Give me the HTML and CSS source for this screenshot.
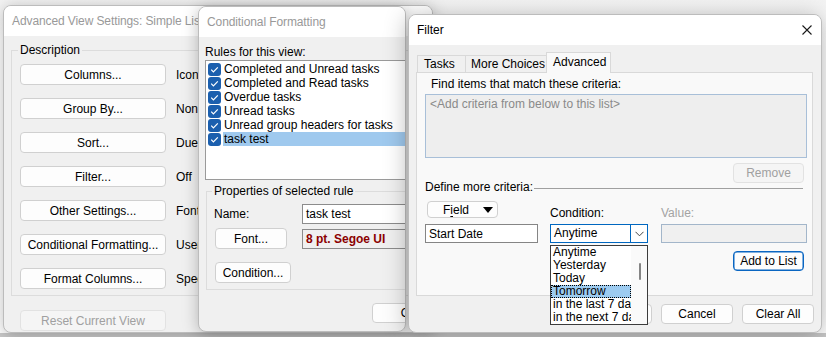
FILE: index.html
```html
<!DOCTYPE html>
<html>
<head>
<meta charset="utf-8">
<title>Filter</title>
<link rel="stylesheet" href="styles.css">
</head>
<body>

<section class="win w1">
  <header class="tb inactive">Advanced View Settings: Simple List</header>
  <div class="b1">
    <fieldset class="grp desc">
      <legend>Description</legend>
      <div class="vrow"><button class="btn wide">Columns...</button><span class="val">Icon, Priority, Attachment, Task Subject</span></div>
      <div class="vrow"><button class="btn wide">Group By...</button><span class="val">None</span></div>
      <div class="vrow"><button class="btn wide">Sort...</button><span class="val">Due Date (descending)</span></div>
      <div class="vrow"><button class="btn wide">Filter...</button><span class="val">Off</span></div>
      <div class="vrow"><button class="btn wide">Other Settings...</button><span class="val">Fonts and other Table View settings</span></div>
      <div class="vrow"><button class="btn wide">Conditional Formatting...</button><span class="val">User defined fonts on each message</span></div>
      <div class="vrow"><button class="btn wide">Format Columns...</button><span class="val">Specify the display formats for each field</span></div>
    </fieldset>
    <button class="btn wide dis reset">Reset Current View</button>
  </div>
</section>

<section class="win w2">
  <header class="tb inactive">Conditional Formatting</header>
  <div class="b2">
    <div class="lbl">Rules for this view:</div>
    <div class="rules">
      <div class="rule"><span class="cb"><svg width="13" height="13" viewBox="0 0 13 13"><path d="M3.2 6.7 5.4 8.9 9.8 4.3" fill="none" stroke="#fff" stroke-width="1.2"/></svg></span><span class="rt">Completed and Unread tasks</span></div>
      <div class="rule"><span class="cb"><svg width="13" height="13" viewBox="0 0 13 13"><path d="M3.2 6.7 5.4 8.9 9.8 4.3" fill="none" stroke="#fff" stroke-width="1.2"/></svg></span><span class="rt">Completed and Read tasks</span></div>
      <div class="rule"><span class="cb"><svg width="13" height="13" viewBox="0 0 13 13"><path d="M3.2 6.7 5.4 8.9 9.8 4.3" fill="none" stroke="#fff" stroke-width="1.2"/></svg></span><span class="rt">Overdue tasks</span></div>
      <div class="rule"><span class="cb"><svg width="13" height="13" viewBox="0 0 13 13"><path d="M3.2 6.7 5.4 8.9 9.8 4.3" fill="none" stroke="#fff" stroke-width="1.2"/></svg></span><span class="rt">Unread tasks</span></div>
      <div class="rule"><span class="cb"><svg width="13" height="13" viewBox="0 0 13 13"><path d="M3.2 6.7 5.4 8.9 9.8 4.3" fill="none" stroke="#fff" stroke-width="1.2"/></svg></span><span class="rt">Unread group headers for tasks</span></div>
      <div class="rule"><span class="cb"><svg width="13" height="13" viewBox="0 0 13 13"><path d="M3.2 6.7 5.4 8.9 9.8 4.3" fill="none" stroke="#fff" stroke-width="1.2"/></svg></span><span class="rt sel">task test</span></div>
    </div>
    <fieldset class="grp props">
      <legend>Properties of selected rule</legend>
      <div class="prow">
        <span class="plbl">Name:</span>
        <span class="tbox">task test</span>
      </div>
      <div class="prow r2">
        <span class="plbl"><button class="btn fontb">Font...</button></span>
        <span class="tbox fontv">8 pt. Segoe UI</span>
      </div>
      <div class="prow r3">
        <button class="btn condb">Condition...</button>
      </div>
    </fieldset>
    <button class="btn okb">OK</button>
  </div>
</section>

<section class="win w3">
  <header class="tb active">
    <span>Filter</span>
    <svg class="close" width="10" height="10" viewBox="0 0 10 10"><path d="M0.5 0.5 9.5 9.5M9.5 0.5 0.5 9.5" stroke="#1a1a1a" stroke-width="1.1"/></svg>
  </header>
  <div class="b3">
    <div class="tabs">
      <span class="tab t1">Tasks</span>
      <span class="tab t2">More Choices</span>
      <span class="tab t3 on">Advanced</span>
    </div>
    <div class="panel">
      <div class="findlbl">Find items that match these criteria:</div>
      <div class="crit">&lt;Add criteria from below to this list&gt;</div>
      <div class="rmrow"><button class="btn dis rm">Remove</button></div>
      <div class="defrow"><span>Define more criteria:</span><span class="rule-line"></span></div>
      <div class="cgrid">
        <button class="btn fieldb"><span>F<span class="u">i</span>eld</span><svg width="10" height="6" viewBox="0 0 10 6"><path d="M0 0h10L5 6z" fill="#000"/></svg></button>
        <span class="clbl">Condition:</span>
        <span class="clbl dim">Value:</span>
        <span class="tbox sd">Start Date</span>
        <span class="combo"><span class="ctext">Anytime</span><span class="cbtn"><svg width="9" height="6" viewBox="0 0 9 6"><path d="M0.5 0.8 4.5 4.8 8.5 0.8" fill="none" stroke="#444" stroke-width="1"/></svg></span></span>
        <span class="tbox vbox"></span>
        <span></span><span></span>
        <button class="btn addb">Add to List</button>
      </div>
    </div>
    <div class="foot">
      <button class="btn fb">OK</button>
      <button class="btn fb">Cancel</button>
      <button class="btn fb">Clear All</button>
    </div>
  </div>
  <div class="drop">
    <div class="dlist">
      <div class="di">Anytime</div>
      <div class="di">Yesterday</div>
      <div class="di">Today</div>
      <div class="di hi">Tomorrow</div>
      <div class="di">in the last 7 days</div>
      <div class="di">in the next 7 days</div>
    </div>
    <div class="sbar"><span class="thumb"></span></div>
  </div>
</section>

</body>
</html>
```

FILE: styles.css
```css
* { box-sizing: border-box; }
html, body { margin: 0; }
body {
  width: 826px;
  height: 337px;
  overflow: hidden;
  position: relative;
  background: linear-gradient(to bottom, #f4f4f4 0, #ffffff 40px, #ffffff 333px, #c9c9c9 333px);
  font: 12px/16px "Liberation Sans", Arial, sans-serif;
  color: #000;
}
button { font: inherit; color: inherit; margin: 0; }

/* windows on the desktop */
.win {
  position: absolute;
  background: #f0f0f0;
  border: 1px solid #bcbcbc;
  border-radius: 8px;
  overflow: hidden;
  box-shadow: 0 2px 16px rgba(0, 0, 0, 0.26);
  display: flex;
  flex-direction: column;
}
.w1 { left: 3px; top: 5px; width: 430px; height: 328px; }
.w2 { left: 198px; top: 6px; width: 208px; height: 326px; }
.w3 { left: 408px; top: 14px; width: 414px; height: 319px; box-shadow: 0 3px 24px rgba(0, 0, 0, 0.3); }

.tb {
  flex: none;
  height: 30px;
  line-height: 30px;
  padding-left: 8px;
  background: #fff;
  white-space: nowrap;
}
.tb.inactive { color: #999; letter-spacing: -0.1px; }
.tb.active { display: flex; justify-content: space-between; align-items: center; padding-right: 9px; }
.close { display: block; }

/* generic controls */
.btn {
  display: flex;
  align-items: center;
  justify-content: center;
  height: 21px;
  padding: 0;
  background: #fdfdfd;
  border: 1px solid #d0d0d0;
  border-radius: 4px;
  white-space: nowrap;
  flex: none;
}
.btn.dis { color: #a0a0a0; background: #f5f5f5; border-color: #e2e2e2; }

.grp { margin: 0; border: 1px solid #dcdcdc; min-width: 0; }
.grp legend { padding: 0 2px; margin-left: -2px; line-height: 16px; }

.tbox {
  display: flex;
  align-items: center;
  height: 20px;
  padding-left: 3px;
  background: #fff;
  border: 1px solid #8c8c8c;
  white-space: nowrap;
  overflow: hidden;
}

/* window 1 */
.b1 { padding: 6px 0 0 7px; }
.desc { width: 420px; padding: 6px 0 6px 8px; }
.vrow { display: flex; align-items: center; gap: 10px; height: 21px; white-space: nowrap; }
.vrow + .vrow { margin-top: 13px; }
.wide { width: 146px; }
.reset { margin: 14px 0 0 9px; }

/* window 2 */
.b2 { padding: 7px 0 0 6px; }
.rules {
  width: 230px;
  height: 120px;
  background: #fff;
  border: 1px solid #9a9a9a;
  padding-top: 1px;
}
.rule { display: flex; align-items: center; height: 14px; white-space: nowrap; }
.cb {
  flex: none;
  width: 13px;
  height: 13px;
  margin-left: 2px;
  border-radius: 3px;
  background: #1b5fae;
}
.cb svg { display: block; }
.rt { margin-left: 2px; padding: 0 1px; line-height: 14px; }
.rt.sel { flex: 1; background: #9fc9ee; }
.props { width: 230px; margin: 3px 0 0 1px; padding: 5px 0 6px 7px; }
.prow { display: grid; grid-template-columns: 88px 1fr; align-items: center; height: 20px; }
.prow.r2 { margin-top: 4px; height: 21px; }
.prow.r3 { margin-top: 13px; height: 21px; display: flex; }
.plbl { white-space: nowrap; }
.fontb { width: 72px; margin-left: 1px; }
.condb { width: 76px; margin-left: 1px; }
.fontv { background: #f0f0f0; color: #8b0000; font-weight: bold; }
.okb { width: 75px; height: 20px; margin: 13px 0 0 167px; }

/* window 3 */
.b3 { padding: 7px 8px 0 7px; }
.tabs {
  position: relative;
  z-index: 1;
  display: flex;
  align-items: flex-end;
  height: 21px;
  margin: 0 0 -1px 1px;
}
.tab {
  height: 18px;
  line-height: 17px;
  border: 1px solid #d9d9d9;
  border-right: none;
  background: #f0f0f0;
  padding-left: 6px;
  white-space: nowrap;
  overflow: hidden;
}
.t1 { width: 48px; }
.t2 { width: 81px; padding-left: 5px; }
.tab.on {
  width: 65px;
  height: 21px;
  line-height: 19px;
  padding-left: 6px;
  background: #f9f9f9;
  border-right: 1px solid #d9d9d9;
  border-bottom: none;
}
.panel {
  height: 224px;
  background: #f9f9f9;
  border: 1px solid #d9d9d9;
  padding: 3px 0 0 8px;
}
.findlbl { margin-left: 6px; }
.crit {
  width: 382px;
  height: 64px;
  margin-top: 2px;
  padding: 1px 0 0 4px;
  background: #eeeeee;
  border: 1px solid #a8bfd8;
  color: #8a8a8a;
}
.rmrow { display: flex; justify-content: flex-end; margin: 5px 8px 0 0; }
.rm { width: 71px; height: 20px; }
.defrow { display: flex; align-items: center; margin: -4px 9px 0 0; height: 16px; white-space: nowrap; }
.rule-line { flex: 1; height: 1px; background: #a0a0a0; margin-left: 1px; margin-top: 2px; }

.cgrid {
  display: grid;
  grid-template-columns: 113px 99px 146px;
  grid-template-rows: 21px 20px 20px;
  column-gap: 12px;
  row-gap: 3px;
  margin-top: 5px;
}
.fieldb {
  width: 71px;
  height: 17px;
  margin: 1px 0 0 2px;
  justify-content: space-between;
  padding: 0 4px 0 15px;
}
.fieldb svg { display: block; margin-top: 1px; }
.u { text-decoration: underline; text-underline-offset: 2px; }
.clbl { align-self: end; line-height: 16px; }
.clbl.dim { color: #a3a3a3; }
.sd { height: 19px; border-color: #858585; }
.combo {
  width: 98px;
  height: 19px;
  display: flex;
  background: #fff;
  border: 1px solid #0067c0;
}
.ctext { flex: 1; padding-left: 3px; line-height: 17px; }
.cbtn {
  width: 17px;
  display: flex;
  align-items: center;
  justify-content: center;
  border-left: 1px solid #0067c0;
}
.cbtn svg { display: block; }
.vbox { height: 19px; background: #f0f0f0; border-color: #a3b6ca; }
.addb {
  justify-self: end;
  width: 71px;
  height: 20px;
  margin: 4px 3px 0 0;
  border: 1px solid #0a66c2;
  box-shadow: inset 0 0 0 0.5px #0a66c2;
}

.foot { display: flex; justify-content: flex-end; gap: 9px; margin: 8px -1px 0 0; }
.fb { width: 72px; height: 20px; }

/* open dropdown list (over content) */
.drop {
  position: absolute;
  left: 141px;
  top: 230px;
  width: 98px;
  height: 80px;
  display: flex;
  background: #fff;
  border: 1px solid #3c3c3c;
  z-index: 5;
}
.dlist { flex: 1; overflow: hidden; }
.di { height: 13px; line-height: 13px; padding-left: 2px; white-space: nowrap; }
.di.hi { background: #9ccbf0; outline: 1px dotted #000; outline-offset: -1px; }
.sbar { width: 16px; position: relative; background: #fafafa; }
.thumb {
  position: absolute;
  left: 8px;
  top: 17px;
  width: 2px;
  height: 17px;
  border-radius: 1px;
  background: #858585;
}
```
